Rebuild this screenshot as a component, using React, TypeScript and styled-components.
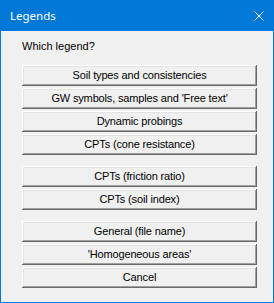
import React from "react";
import styled, { createGlobalStyle } from "styled-components";

const GlobalStyle = createGlobalStyle`
  html, body {
    margin: 0;
    padding: 0;
    background: #f0f0f0;
  }
`;

const Window = styled.div`
  width: 274px;
  height: 303px;
  box-sizing: border-box;
  border: 1px solid #0078d7;
  border-top: none;
  background: #f0f0f0;
  display: flex;
  flex-direction: column;
`;

const TitleBar = styled.div`
  height: 31px;
  margin: 0 -1px;
  background: #0078d7;
  display: flex;
  align-items: center;
  justify-content: space-between;
  padding: 0 10px 0 10px;
  box-sizing: border-box;
  color: #fff;
  font-family: "Noto Sans", "Open Sans", sans-serif;
  font-size: 11.5px;
`;

const Title = styled.span`
  margin-top: -1px;
`;

const CloseIcon = styled.svg`
  width: 10px;
  height: 10px;
  display: block;
`;

const Content = styled.div`
  padding: 9px 16px 0 21px;
  display: flex;
  flex-direction: column;
  font-family: "Liberation Sans", Arial, sans-serif;
  font-size: 11px;
  color: #000;
`;

const Prompt = styled.div`
  line-height: 13px;
  height: 13px;
  margin-bottom: 12px;
`;

const ButtonGroup = styled.div<{ $last?: boolean }>`
  display: flex;
  flex-direction: column;
  gap: 2px;
  margin-bottom: ${(p) => (p.$last ? "0" : "11px")};
`;

const Button = styled.button`
  width: 235px;
  height: 21px;
  padding: 0;
  margin: 0;
  box-sizing: border-box;
  background: #f0f0f0;
  border: none;
  box-shadow: inset -1px -1px 0 #696969, inset 1px 1px 0 #ffffff,
    inset -2px -2px 0 #a0a0a0, inset 2px 2px 0 #e3e3e3;
  font-family: "Liberation Sans", Arial, sans-serif;
  font-size: 11px;
  letter-spacing: -0.15px;
  color: #000;
  line-height: 19px;
  text-align: center;
  cursor: pointer;
`;

const groups = [
  [
    "Soil types and consistencies",
    "GW symbols, samples and 'Free text'",
    "Dynamic probings",
    "CPTs (cone resistance)",
  ],
  ["CPTs (friction ratio)", "CPTs (soil index)"],
  ["General (file name)", "'Homogeneous areas'", "Cancel"],
];

const App: React.FC = () => {
  return (
    <>
      <GlobalStyle />
      <Window>
        <TitleBar>
          <Title>Legends</Title>
          <CloseIcon viewBox="0 0 10 10">
            <path d="M0.5 0.5 L9.5 9.5 M9.5 0.5 L0.5 9.5" stroke="#fff" strokeWidth="1" fill="none" />
          </CloseIcon>
        </TitleBar>
        <Content>
          <Prompt>Which legend?</Prompt>
          {groups.map((g, i) => (
            <ButtonGroup key={i} $last={i === groups.length - 1}>
              {g.map((label) => (
                <Button key={label}>{label}</Button>
              ))}
            </ButtonGroup>
          ))}
        </Content>
      </Window>
    </>
  );
};

export default App;
